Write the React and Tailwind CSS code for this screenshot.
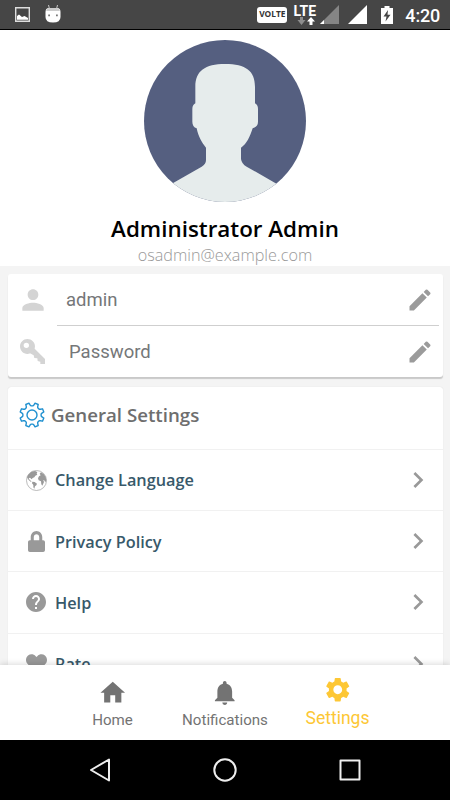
import { FaHeart, FaLock } from 'react-icons/fa'
import { MdChevronRight, MdEdit, MdHelp, MdHome, MdNotifications, MdPerson, MdSettings } from 'react-icons/md'

const ROWS = [
  { id: 'language', label: 'Change Language', icon: <EarthIcon /> },
  { id: 'privacy', label: 'Privacy Policy', icon: <FaLock className="h-[21px] w-[17px]" preserveAspectRatio="none" /> },
  { id: 'help', label: 'Help', icon: <MdHelp className="size-6 shrink-0" /> },
  { id: 'rate', label: 'Rate', icon: <FaHeart className="size-[21px]" /> }
]

const TABS = [
  { id: 'home', label: 'Home', icon: MdHome },
  { id: 'notifications', label: 'Notifications', icon: MdNotifications },
  { id: 'settings', label: 'Settings', icon: MdSettings, active: true }
]

function EarthIcon() {
  return (
    <svg viewBox="0 0 63 63" className="size-[21px]" fill="currentColor">
      <circle cx="31.5" cy="31.5" r="30" fill="none" stroke="currentColor" strokeWidth="2" />
      <path d="M6 15 L16 5 L27 3 L34 6 L32 11 L34 14 L28 17 L25 22 L20 24 L17 28 L12 23 L8 25 L12 31 L17 34 L14 35 L8 30 L3 22 Z" />
      <path d="M19 35 L26 36 L33 41 L31 46 L27 49 L25 56 L22 52 L22 45 L18 40 Z" />
      <path d="M39 19 L44 16 L41 11 L45 7 L53 12 L59 20 L61 31 L58 37 L54 30 L52 31 L54 36 L49 47 L46 43 L45 34 L38 31 L36 25 Z" />
    </svg>
  )
}

function KeyIcon() {
  return (
    <svg viewBox="0 0 75 75" className="h-[25px] w-[25px]" fill="currentColor">
      <path
        fillRule="evenodd"
        d="M22 0 C35 0 45 10 45 22 L44 29 L75 60 L75 75 L61 75 L61 68 L53 66 L52 58 L43 57 L41 49 L30 43 C26 45 24 45 22 45 C10 45 0 35 0 22 C0 10 10 0 22 0 Z M19 11 A8 8 0 1 0 19 27 A8 8 0 1 0 19 11 Z"
      />
    </svg>
  )
}

// eight teeth, with a gap pointing straight up
const gearPath = (() => {
  const points = []
  for (let i = 0; i < 8; i++) {
    const mid = 22.5 + i * 45
    const corners = [[-16, 9.2], [-11.5, 10.2], [-8, 12.2], [8, 12.2], [11.5, 10.2], [16, 9.2]]
    corners.forEach(([offset, r]) => {
      const a = ((mid + offset) * Math.PI) / 180
      points.push(`${(13 + r * Math.cos(a)).toFixed(2)} ${(13 + r * Math.sin(a)).toFixed(2)}`)
    })
  }
  return `M${points.join('L')}Z`
})()

function GearIcon() {
  return (
    <svg viewBox="0 0 26 26" className="size-[26px]" fill="none" stroke="#2191d0" strokeWidth="1.4" strokeLinejoin="round">
      <path d={gearPath} />
      <circle cx="13" cy="13" r="5" />
    </svg>
  )
}

function Avatar() {
  return (
    <svg viewBox="42 25 486 486" className="size-[162px] shrink-0">
      <clipPath id="avatar">
        <circle cx="285" cy="268" r="243" />
      </clipPath>
      <g clipPath="url(#avatar)">
        <path d="M42 25H528V511H42Z" fill="#555f80" />
        <path
          d="M285 97 C348 97 375 118 375 165 L375 215 Q384 220 384 232 L384 270 Q384 285 368 290 C360 315 350 337 333 348 L333 382 Q335 397 350 405 L455 465 L455 540 L115 540 L115 462 L215 405 Q228 398 228 385 L228 348 C215 332 205 315 200 290 Q187 285 187 270 L187 232 Q187 220 196 215 L196 165 C196 118 225 97 285 97Z"
          fill="#e6ecec"
        />
      </g>
    </svg>
  )
}

function StatusBar() {
  return (
    <header className="flex h-[30px] shrink-0 items-center justify-between border-b border-black bg-[#464646] pr-[10px] pl-[15px] text-white">
      <div className="flex items-center gap-[15px]">
        <svg viewBox="0 0 15 15" className="size-[15px]">
          <path d="M.7.7H14.3V14.3H.7Z" fill="none" stroke="#dedede" strokeWidth="1.4" />
          <path d="M2 12.8V9L4 7.5L7 10L9.5 9L13 11V12.8Z" fill="#fff" />
        </svg>
        <svg viewBox="0 0 16 18" className="-mt-0.5 h-[18px] w-4">
          <path d="M3.5 0L4.5 4M12.5 0L11.5 4" stroke="#c8c8c8" strokeWidth="1" />
          <path d="M.5 7Q.5 3 4 3H12Q15.5 3 15.5 7V12Q15.5 17.5 8 17.5Q.5 17.5 .5 12Z" fill="#fff" />
          <path d="M1 6Q2 3 4 3H12Q14 3 15 6Z" fill="#ccc" />
          <path d="M3.2 9.5h1.8v1.8H3.2ZM11 9.5h1.8v1.8H11Z" fill="#777" />
        </svg>
      </div>
      <div className="flex items-center">
        <span className="mr-[6px] flex h-4 w-[30px] items-center justify-center rounded-[3px] bg-white font-['Open_Sans',sans-serif] text-[8.4px] font-bold text-[#333]">
          VOLTE
        </span>
        <div className="mr-1 flex w-[23px] flex-col items-center">
          <span className="h-[12px] text-[14px] leading-[12px] font-bold">LTE</span>
          <svg viewBox="0 0 18 8" className="ml-0.5 h-2 w-[18px]">
            <path d="M3 0h3v3h2.5L4.5 8L.5 3H3Z" fill="#8d8d8d" />
            <path d="M12.5 8h3V4.5h2.5L14 0L10 4.5h2.5Z" fill="#fff" />
          </svg>
        </div>
        <svg viewBox="0 0 19 19" className="mr-[9px] size-[19px]">
          <path d="M0 19L19 0V19Z" fill="#858585" />
          <path d="M0 19L4 15V19Z" fill="#fff" />
        </svg>
        <svg viewBox="0 0 19 19" className="mr-[14px] size-[19px]">
          <path d="M0 19L19 0V19Z" fill="#fff" />
        </svg>
        <svg viewBox="0 0 12 18" className="mr-[12px] h-[18px] w-3">
          <path d="M3.5 0h5v2H12V18H0V2h3.5Z" fill="#fff" />
          <path d="M7 4L2.5 10.5H5.5L4.5 15.5L9.5 8.8H6.5Z" fill="#464646" />
        </svg>
        <span className="mt-0.5 text-[18px] leading-none font-medium tracking-[-0.2px]">4:20</span>
      </div>
    </header>
  )
}

export default function App() {
  return (
    <div className="flex h-[800px] w-[450px] flex-col overflow-hidden bg-[#f4f4f4] font-['Roboto',sans-serif]">
      <StatusBar />

      <section className="flex h-[236px] shrink-0 flex-col items-center bg-white pt-[10px] font-['Open_Sans',sans-serif]">
        <Avatar />
        <h1 className="mt-3 text-[22.4px] leading-[30px] font-semibold whitespace-nowrap text-black">Administrator Admin</h1>
        <p className="text-[16.2px] leading-[22px] font-light text-[#999]">osadmin@example.com</p>
      </section>

      <main className="flex min-h-0 flex-1 flex-col gap-[10px] overflow-hidden px-2 pt-2">
        <section className="h-[103px] w-[435px] shrink-0 rounded-[3px] bg-white text-[18.5px] text-[#757779] shadow-[0_2px_1px_#c9c9c9]">
          <div className="flex h-[52px] items-center pr-1 pl-[9px]">
            <MdPerson className="size-8 text-[#d4d4d4]" />
            <div className="ml-2 flex h-full flex-1 items-center justify-between border-b border-[#cfcfcf] pr-[5px] pl-[9px]">
              <span className="pt-0.5">admin</span>
              <MdEdit className="size-7 text-[#9b9b9b]" />
            </div>
          </div>
          <div className="flex h-[51px] items-center pr-[9px] pl-3">
            <span className="text-[#d4d4d4]">
              <KeyIcon />
            </span>
            <span className="ml-6 flex-1 pt-0.5">Password</span>
            <MdEdit className="size-7 text-[#9b9b9b]" />
          </div>
        </section>

        <section className="w-[435px] shrink-0 rounded-t-[3px] bg-white font-['Open_Sans',sans-serif] shadow-[0_0_1px_#d0d0d0]">
          <div className="flex h-[62px] items-center pb-[6px] pl-[11px]">
            <GearIcon />
            <h2 className="ml-[6px] text-[18.7px] font-semibold text-[#6e6e6e]">General Settings</h2>
          </div>
          {ROWS.map((row) => (
            <div key={row.id} className="flex h-[61.2px] items-center border-t border-[#f1f1f1] pr-[9px] pl-[17px] text-[#999]">
              <span className="flex w-[22px] justify-center">{row.icon}</span>
              <span className="ml-2 flex-1 pt-px text-[16.3px] font-semibold text-[#38596a]">{row.label}</span>
              <MdChevronRight className="size-8" />
            </div>
          ))}
        </section>
      </main>

      <nav className="z-10 flex h-[75px] shrink-0 justify-center bg-white shadow-[0_-1px_6px_#00000026]">
        {TABS.map(({ id, label, icon: Icon, active }) => (
          <button
            key={id}
            className={
              'flex w-[112.5px] flex-col items-center ' +
              (active ? 'pt-[10px] text-[17.5px] text-[#fdc735]' : 'pt-[13px] text-[15.1px] text-[#737373]')
            }
          >
            <Icon className="size-[29.5px]" />
            <span className={active ? 'mt-[3.5px] leading-5' : 'mt-0.5 leading-5'}>{label}</span>
          </button>
        ))}
      </nav>

      <footer className="flex h-[60px] shrink-0 items-center justify-between bg-black pr-[89px] pl-[89px]">
        <svg viewBox="0 0 22 26" className="h-[26px] w-[22px]" fill="none" stroke="#eee" strokeWidth="2" strokeLinejoin="round">
          <path d="M20 2.5V23.5L2 13Z" />
        </svg>
        <svg viewBox="0 0 26 26" className="size-[26px]" fill="none" stroke="#eee" strokeWidth="2">
          <circle cx="13" cy="13" r="10.7" />
        </svg>
        <svg viewBox="0 0 22 22" className="size-[22px]" fill="none" stroke="#eee" strokeWidth="2" strokeLinejoin="round">
          <path d="M1.5 1.5H20.5V20.5H1.5Z" />
        </svg>
      </footer>
    </div>
  )
}
